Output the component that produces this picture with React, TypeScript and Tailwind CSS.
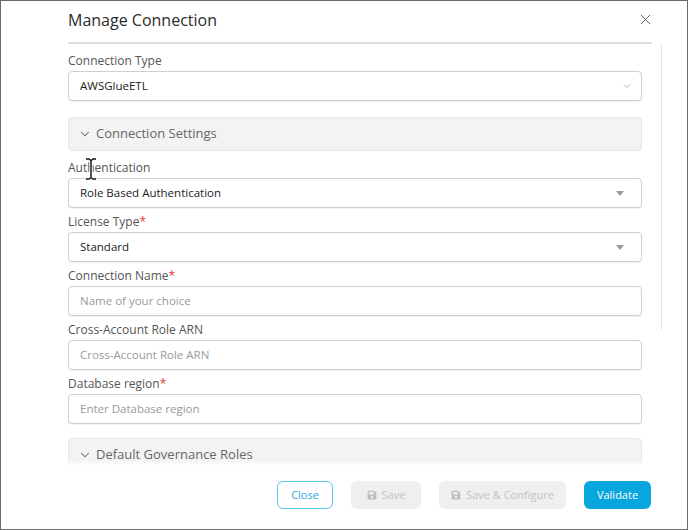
import { ChevronDown, X } from 'lucide-react'
import { FaSave } from 'react-icons/fa'

const font = { fontFamily: '"Open Sans", "Liberation Sans", sans-serif' }

function Label({ text, required }: { text: string; required?: boolean }) {
  return (
    <div className="mb-[2px] h-[16px] text-[12px] leading-[16px] text-[#555]">
      {text}
      {required ? <span className="text-[#e53935]">*</span> : null}
    </div>
  )
}

function Caret() {
  return (
    <svg width="8" height="5" viewBox="0 0 8 5" className="mr-[11px]">
      <path d="M0 0h8L4 5z" fill="#9a9a9a" />
    </svg>
  )
}

function SelectBox({ value, caret }: { value: string; caret?: boolean }) {
  return (
    <div className="flex h-[30px] items-center justify-between rounded-[4px] border border-[#cfcfcf] bg-white pl-[11px] pr-[6px] shadow-[0_1px_1px_rgba(0,0,0,0.06)]">
      <span className="text-[11.5px] font-medium text-[#222]">{value}</span>
      {caret ? <Caret /> : <ChevronDown size={12} strokeWidth={1.5} className="mr-[2px] text-[#9a9a9a]" />}
    </div>
  )
}

function TextInput({ placeholder }: { placeholder: string }) {
  return (
    <div className="flex h-[30px] items-center rounded-[4px] border border-[#cfcfcf] bg-white pl-[11px] shadow-[0_1px_1px_rgba(0,0,0,0.06)]">
      <span className="text-[11.5px] text-[#9a9a9a]">{placeholder}</span>
    </div>
  )
}

function Section({ title }: { title: string }) {
  return (
    <div className="flex h-[34px] items-center gap-[4px] rounded-[4px] border border-[#e6e6e6] bg-[#f3f3f3] pl-[9px]">
      <ChevronDown size={14} strokeWidth={1.75} className="text-[#666]" />
      <span className="text-[13px] text-[#666]">{title}</span>
    </div>
  )
}

export default function App() {
  return (
    <div
      style={font}
      className="relative flex h-[530px] w-[688px] flex-col border-[1.5px] border-[#6b6b6b] bg-white"
    >
      <div className="shrink-0 pl-[67px] pr-[35px]">
        <div className="flex h-[43px] items-center justify-between border-b-2 border-[#dedede] pb-[4px]">
          <h1 className="text-[16px] font-medium text-[#2b2b2b]">Manage Connection</h1>
          <X size={17} strokeWidth={1.3} className="-mr-[2px] text-[#555]" />
        </div>
      </div>

      <div className="relative flex min-h-0 flex-1 overflow-hidden pl-[67px] pr-[25px]">
        <div className="w-[574px] shrink-0 pt-[9px]">
          <Label text="Connection Type" />
          <SelectBox value="AWSGlueETL" />

          <div className="mt-[16px]">
            <Section title="Connection Settings" />
          </div>

          <div className="mt-[9px] space-y-[6px]">
            <div>
              <Label text="Authentication" />
              <SelectBox value="Role Based Authentication" caret />
            </div>
            <div>
              <Label text="License Type" required />
              <SelectBox value="Standard" caret />
            </div>
            <div>
              <Label text="Connection Name" required />
              <TextInput placeholder="Name of your choice" />
            </div>
            <div>
              <Label text="Cross-Account Role ARN" />
              <TextInput placeholder="Cross-Account Role ARN" />
            </div>
            <div>
              <Label text="Database region" required />
              <TextInput placeholder="Enter Database region" />
            </div>
          </div>

          <div className="mt-[14px]">
            <Section title="Default Governance Roles" />
          </div>
        </div>
        <div className="flex flex-1 justify-end">
          <div className="h-[286px] w-px bg-[#e4e4e4]" />
        </div>
        <div className="pointer-events-none absolute bottom-0 left-0 right-0 h-[6px] bg-gradient-to-b from-transparent to-white" />
      </div>

      <div className="flex h-[63px] shrink-0 items-start justify-end gap-[18px] pr-[36px] pt-[15px]">
        <button className="h-[28px] w-[56px] rounded-[6px] border border-[#5cc6f2] bg-white text-[11px] font-medium text-[#2ea8de]">
          Close
        </button>
        <button className="flex h-[28px] w-[70px] items-center justify-center gap-[5px] rounded-[6px] bg-[#efefef] text-[11px] text-[#c2c2c2]">
          <FaSave size={10} className="text-[#bdbdbd]" />
          Save
        </button>
        <button className="flex h-[28px] w-[127px] items-center justify-center gap-[5px] rounded-[6px] bg-[#efefef] text-[11px] text-[#c2c2c2]">
          <FaSave size={10} className="text-[#bdbdbd]" />
          Save &amp; Configure
        </button>
        <button className="h-[28px] w-[67px] rounded-[6px] bg-[#08a6df] text-[11px] font-medium text-white">
          Validate
        </button>
      </div>

      <svg
        width="12"
        height="22"
        viewBox="0 0 12 22"
        className="pointer-events-none absolute left-[84px] top-[157px]"
      >
        <path d="M1 1h3l2 1.5L8 1h3M6 2.5v17M1 21h3l2-1.5L8 21h3" fill="none" stroke="#fff" strokeWidth="3" />
        <path d="M1 1h3l2 1.5L8 1h3M6 2.5v17M1 21h3l2-1.5L8 21h3" fill="none" stroke="#111" strokeWidth="1.4" />
      </svg>
    </div>
  )
}
